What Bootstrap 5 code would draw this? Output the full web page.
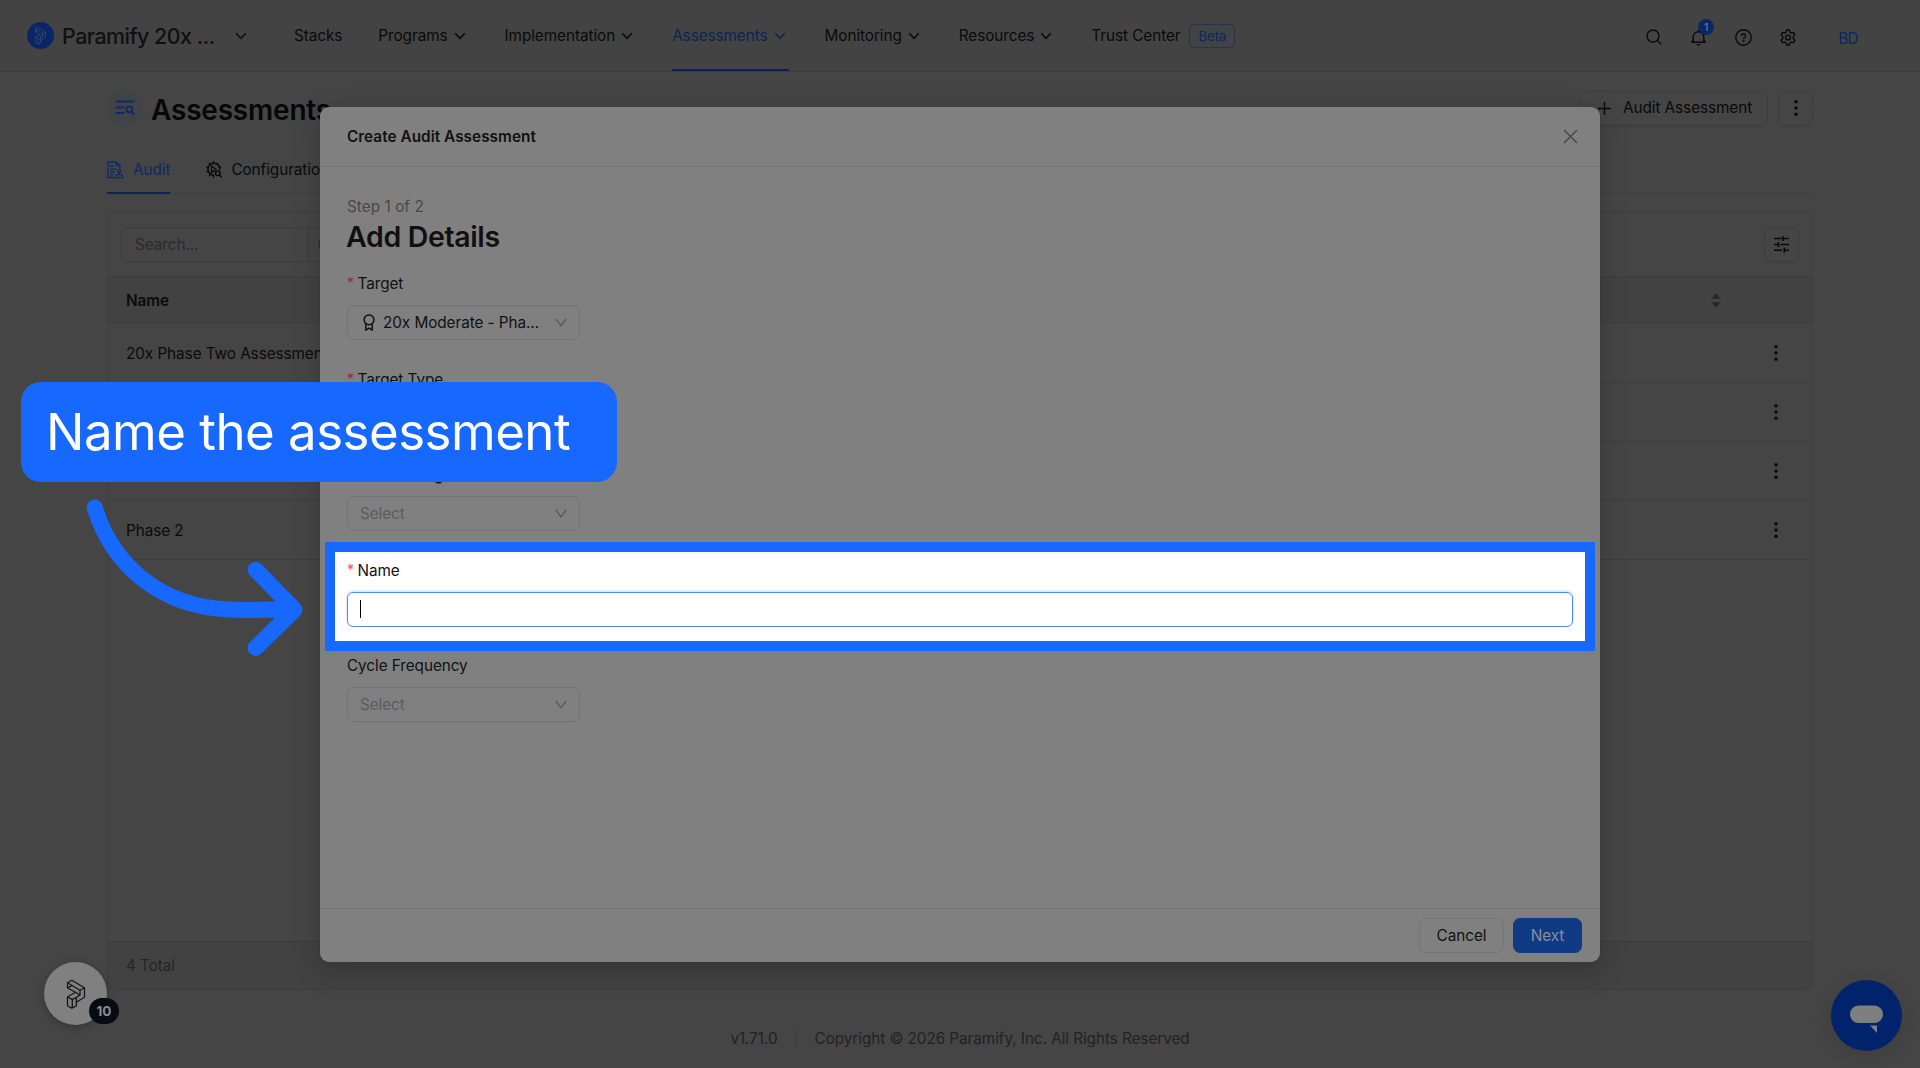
<!DOCTYPE html>
<html lang="en">
<head>
<meta charset="utf-8">
<meta name="viewport" content="width=device-width, initial-scale=1">
<title>Assessments</title>
<link href="https://cdn.jsdelivr.net/npm/bootstrap@5.3.0/dist/css/bootstrap.min.css" rel="stylesheet">
<style>
  body { width: 1920px; height: 1068px; overflow: hidden; position: relative; background: #454545; color: #0a0a0a; font: 400 15.3px/20px Inter, "Liberation Sans", sans-serif; letter-spacing: -.06px; }
  svg { display: block; flex: none; fill: none; stroke: currentColor; }
  svg.solid { fill: currentColor; stroke: none; }
  .topbar { height: 72px; background: #434343; border-bottom: 1px solid #3c3c3c; padding: 0 62px 0 27px; }
  .org { width: 267px; color: #101010; }
  .brand-name { font-size: 21.4px; letter-spacing: -.5px; font-weight: 500; line-height: 28px; margin-left: 8px; width: 173px; white-space: nowrap; }
  .menu { gap: 36px; }
  .menu-link { height: 71px; position: relative; white-space: nowrap; padding: 1px 3px 0 0; color: #0a0a0a; }
  .menu-link svg { margin-left: 6px; }
  .active-link { color: #0b2456; }
  .active-link::after { content: ""; position: absolute; left: 0; right: 0; bottom: 0; height: 2px; background: #0b2250; }
  .beta { border: 1px solid #28334d; border-radius: 5px; font-size: 13.3px; height: 24px; width: 46px; margin-left: 9px; color: #0c2759; background: #414347; }
  .tools { gap: 28px; padding-top: 3px; color: #0a0a0a; }
  .initials { color: #0b2764; margin-left: 14px; letter-spacing: -.6px; padding-top: 3px; }
  .bell-count { left: 8px; top: -10px; width: 16px; height: 16px; border-radius: 50%; background: #0b2862; color: #7a7f8c; font-size: 11px; line-height: 16px; text-align: center; }
  .page-zone { margin: 0 107px; padding-top: 18px; }
  .page-icon { width: 36px; height: 36px; border-radius: 50%; background: #414347; color: #0d2b66; }
  .page-title { font-size: 28px; font-weight: 600; line-height: 36px; margin: 0 0 0 8px; padding-top: 2px; height: 36px; letter-spacing: -.2px; color: #070707; }
  .ghost { height: 35px; border: 1px solid #3d3d3d; border-radius: 7px; color: #090909; box-shadow: 0 2px 0 rgba(0,0,0,.04); }
  .ghost-wide { width: 189px; padding-left: 18px; gap: 12px; }
  .ghost-sq { width: 35px; }
  .tabs { height: 42px; margin-top: 26px; border-bottom: 1px solid #3f3f3f; gap: 36px; }
  .tab-item { padding-bottom: 6px; }
  .tab-on { position: relative; color: #0c2a66; }
  .tab-on::after { content: ""; position: absolute; left: 0; right: 0; bottom: -1px; height: 2px; background: #0b2453; }
  .tabs svg { margin-right: 9px; }
  .panel { height: 778px; border: 1px solid #3e3e3e; border-radius: 9px; margin-top: 18px; overflow: hidden; }
  .panel-tools { height: 63px; padding: 0 13px; }
  .search { width: 222px; height: 35px; border: 1px solid #3c3c3c; border-radius: 7px; color: #2b2b2b; }
  .search-text { width: 187px; height: 33px; border-right: 1px solid #3c3c3c; padding-left: 13px; line-height: 34px; }
  .thead-row { height: 48px; background: #424242; border-top: 1px solid #3c3c3c; border-bottom: 1px solid #3d3d3d; padding: 0 72px 0 18px; font-weight: 600; }
  .trow { height: 59px; border-bottom: 1px solid #3d3d3d; padding: 0 34px 0 18px; }
  .trow span, .thead-row span { padding-top: 2px; }
  .sep { width: 1px; height: 30px; background: #3e3e3e; margin-left: 18px; }
  .panel-foot { height: 48px; background: #424242; border-top: 1px solid #3c3c3c; padding-left: 18px; color: #252525; }
  .page-foot { color: #222; padding-top: 39px; gap: 18px; }
  .foot-bar { width: 1px; height: 16px; background: #3a3a3a; }
  .dlg { position: absolute; left: 320px; top: 107px; width: 1280px; height: 855px; border-radius: 9px; background: #808080; box-shadow: 0 6px 16px rgba(0,0,0,.08), 0 3px 6px -4px rgba(0,0,0,.12), 0 9px 28px 8px rgba(0,0,0,.07); isolation: isolate; color: #111; }
  .dlg-head { height: 60px; border-bottom: 1px solid #767676; padding: 0 22px 0 27px; font-weight: 600; letter-spacing: .05px; }
  .dlg-body { padding: 28px 27px 0; }
  .step { color: #484848; line-height: 23px; letter-spacing: .05px; }
  .dlg-title { font-size: 28.5px; font-weight: 600; line-height: 38px; margin: 0 0 17px -1px; letter-spacing: -.35px; color: #101010; }
  .field { height: 95.6px; position: relative; }
  .flabel { height: 22px; line-height: 22px; margin-bottom: 10px; white-space: nowrap; }
  .star { color: #982a2b; font-size: 14px; width: 10.500px; line-height: 20px; }
  .pick { width: 233px; height: 35px; border: 1px solid #747474; border-radius: 7px; padding: 0 12px; }
  .pick svg:last-child { color: #555; }
  .blank { color: #5c5c5c; }
  .spot::before { content: ""; position: absolute; z-index: -1; left: -22px; right: -22px; top: -18px; height: 109px; border: 10px solid #1668ff; background: #fff; }
  .spot .star { color: #ff4d4f; }
  .live { height: 35px; border: 1px solid #4a8cff; border-radius: 6px; box-shadow: 0 -1px 0 1px #e4eefe; padding-left: 12px; }
  .caret { width: 1px; height: 18px; background: #000; }
  .dlg-foot { position: absolute; left: 0; right: 0; bottom: 0; height: 54px; border-top: 1px solid #747474; padding-right: 18px; gap: 9px; }
  .bt { height: 35px; border-radius: 7px; border: 1px solid #757575; width: 85px; }
  .bt-go { width: 69px; background: #113a85; border-color: #113a85; color: #8a8f9a; }
  .callout { position: absolute; left: 21px; top: 382px; width: 596px; height: 100px; border-radius: 20px; background: #1668ff; color: #fff; font-size: 51px; line-height: 100px; padding-left: 25px; letter-spacing: -.52px; white-space: nowrap; }
  .over { position: absolute; }
  .pointer { left: 80px; top: 490px; color: #1668ff; }
  .launcher { left: 44px; top: 962px; width: 63px; height: 63px; border-radius: 50%; background: #808080; box-shadow: 0 2px 8px rgba(0,0,0,.25); color: #161616; }
  .count { left: 89px; top: 998px; width: 30px; height: 26px; border-radius: 13px; background: #060b14; color: #8b8b8b; font-size: 13.5px; font-weight: 700; }
  .chat { left: 1831px; top: 980px; width: 71px; height: 71px; border-radius: 50%; background: #00236b; color: #7f7f7f; box-shadow: 0 4px 20px rgba(0,0,0,.12); }
</style>
</head>
<body>
<svg width="0" height="0" class="position-absolute">
  <symbol id="chev" viewBox="0 0 12 8"><path d="M1.200 1.200 6 6.400 10.800 1.200" stroke-width="1.6"/></symbol>
  <symbol id="thin-chev" viewBox="0 0 12 9"><path d="M.8 .8 6 7.800 11.200 .8" stroke-width="1.200"/></symbol>
  <symbol id="dots" viewBox="0 0 4 16"><g fill="currentColor" stroke="none"><circle cx="2" cy="1.800" r="1.700"/><circle cx="2" cy="8" r="1.700"/><circle cx="2" cy="14.200" r="1.700"/></g></symbol>
  <symbol id="logo" viewBox="0 0 20 30"><path stroke-linejoin="round" d="M1.500 3.800 5.800 1.300 18.500 8.800V18.300L10.300 23.200V27L5.800 29.200 1.500 27V17.800L9.500 13.300 1.500 9ZM1.500 3.800 14 11.200 18.500 8.800M14 11.200V16.200L6.300 20.600V29M1.500 17.800 6.300 20.600M1.500 9 5.800 6.600M9.500 13.300 14 16.200M10.300 23.200V18.400"/></symbol>
</svg>

<header class="topbar d-flex align-items-start">
  <div class="org d-flex align-items-center h-100">
    <svg width="27" height="27" viewBox="0 0 27 27" color="#4a5678"><circle cx="13.500" cy="13.500" r="13.500" fill="#0a2664" stroke="none"/><use href="#logo" x="7.500" y="4.500" width="12" height="18"/></svg>
    <div class="brand-name">Paramify 20x ...</div>
    <svg width="12" height="8"><use href="#chev"/></svg>
  </div>
  <nav class="menu d-flex">
    <a class="menu-link pe-0 d-flex align-items-center text-decoration-none">Stacks</a>
    <a class="menu-link d-flex align-items-center text-decoration-none">Programs<svg width="12" height="8"><use href="#chev"/></svg></a>
    <a class="menu-link d-flex align-items-center text-decoration-none">Implementation<svg width="12" height="8"><use href="#chev"/></svg></a>
    <a class="menu-link active-link d-flex align-items-center text-decoration-none">Assessments<svg width="12" height="8"><use href="#chev"/></svg></a>
    <a class="menu-link d-flex align-items-center text-decoration-none">Monitoring<svg width="12" height="8"><use href="#chev"/></svg></a>
    <a class="menu-link d-flex align-items-center text-decoration-none">Resources<svg width="12" height="8"><use href="#chev"/></svg></a>
    <a class="menu-link d-flex align-items-center text-decoration-none">Trust Center<span class="beta d-flex align-items-center justify-content-center">Beta</span></a>
  </nav>
  <div class="tools d-flex align-items-center ms-auto h-100">
    <svg width="16" height="16" viewBox="0 0 16 16" stroke-width="1.400"><circle cx="7" cy="7" r="6"/><path d="m11.400 11.400 3.800 3.800"/></svg>
    <div class="position-relative">
      <svg width="17" height="17" viewBox="0 0 17 17" stroke-width="1.400" stroke-linejoin="round"><path d="M1.600 13.300h13.800M3.200 13V8a5.300 5.300 0 0 1 10.600 0v5M8.500 1v1.700M6.700 15.600h3.600"/><path d="m3.200 10.800-1.600 2.500M13.800 10.800l1.600 2.500"/></svg>
      <span class="bell-count over">1</span>
    </div>
    <svg width="17" height="17" viewBox="0 0 17 17" stroke-width="1.400"><circle cx="8.500" cy="8.500" r="7.700"/><path d="M6.400 6.900a2.100 2.100 0 1 1 3 1.900c-.7.300-.9.700-.9 1.500"/><circle cx="8.500" cy="12.200" r=".4"/></svg>
    <svg width="16" height="17" viewBox="0 0 16 17" stroke-width="1.400" stroke-linejoin="round"><path d="M6.600 1h2.800l.5 2.100 1.500.9 2.100-.7 1.400 2.500-1.600 1.500v2.400l1.600 1.500-1.400 2.500-2.100-.7-1.500.9-.5 2.100H6.600l-.5-2.100-1.500-.9-2.100.7-1.400-2.500 1.600-1.500V7.300L1.100 5.800l1.400-2.500 2.100.7 1.500-.9z"/><circle cx="8" cy="8.500" r="2.400"/></svg>
    <span class="initials">BD</span>
  </div>
</header>

<main class="page-zone">
  <div class="d-flex align-items-center">
    <div class="page-icon d-flex align-items-center justify-content-center">
      <svg width="20" height="16" viewBox="0 0 20 16" stroke-width="1.800" stroke-linecap="round"><path d="M1.500 1.500h17M1.500 7.500h7M1.500 13h7"/><circle cx="14.300" cy="9.500" r="3"/><path d="m16.600 11.900 2.100 2.400"/></svg>
    </div>
    <h1 class="page-title">Assessments</h1>
    <div class="ghost ghost-wide d-flex align-items-center ms-auto">
      <svg width="13" height="13" viewBox="0 0 13 13" stroke-width="1.400"><path d="M6.500 0v13M0 6.500h13"/></svg><span>Audit Assessment</span>
    </div>
    <div class="ghost ghost-sq d-flex align-items-center justify-content-center" style="margin-left:10px"><svg width="4" height="16"><use href="#dots"/></svg></div>
  </div>

  <div class="tabs d-flex">
    <div class="tab-item tab-on d-flex align-items-center">
      <svg width="17" height="18" viewBox="0 0 17 18" stroke-width="1.300" stroke-linecap="round" stroke-linejoin="round"><path d="M7 16.500H1V1h8.500L13 4.500V7M9.300 1v3.700H13M3.600 5h2.600M3.600 8.200h5M3.600 11h3.500M3.600 13.800h2.500"/><circle cx="12.300" cy="10.200" r="1.500"/><path d="M12.300 11.700v1.800M9 16.800v-1.600c0-1 .6-1.600 1.600-1.600h3.400c1 0 1.600.6 1.600 1.600v1.600z"/></svg>Audit
    </div>
    <div class="tab-item d-flex align-items-center">
      <svg width="16" height="17" viewBox="0 0 16 17" stroke-width="1.500"><path d="M13.800 9A6 6 0 1 0 8 14.200"/><path d="M7.500 0v2.500M3 1.800l1.300 2M.3 5.800l2.300.8M.2 11l2.300-1M3.200 15.200l1.300-2M7.500 14v2.700M12 1.800l-1.300 2M15 5.800l-2.300.8M5.500 5l4.500 3.300-4.500 3.300z" stroke-width="1.300"/><circle cx="11.800" cy="12.200" r="2.300"/><path d="m13.500 14 2.200 2.300"/></svg>Configuration
    </div>
  </div>

  <section class="panel d-flex flex-column">
    <div class="panel-tools d-flex align-items-center justify-content-between">
      <div class="search d-flex"><div class="search-text">Search...</div><svg class="ms-2 mt-2" width="15" height="15" viewBox="0 0 16 16" stroke-width="1.300"><circle cx="8" cy="8" r="6"/></svg></div>
      <div class="ghost ghost-sq d-flex align-items-center justify-content-center">
        <svg width="15" height="17" viewBox="0 0 15 17" stroke-width="1.600"><path d="M0 2.500h7.500M9 2.500h6M9 0v5M0 8.500h4.500M6.500 8.500H15M4.500 6v5M0 14.300h8M10.500 14.300H15M10.300 11.800v5"/></svg>
      </div>
    </div>
    <div class="thead-row d-flex align-items-center">
      <span>Name</span>
      <svg class="solid ms-auto" width="10" height="15" viewBox="0 0 10 15" color="#262626"><path d="M5 .5l4.600 5.300H.4zM5 14.500l4.600-5.300H.4z"/></svg>
      <i class="sep"></i>
    </div>
    <div class="trow d-flex align-items-center justify-content-between"><span>20x Phase Two Assessment</span><svg width="4" height="16"><use href="#dots"/></svg></div>
    <div class="trow d-flex align-items-center justify-content-end"><svg width="4" height="16"><use href="#dots"/></svg></div>
    <div class="trow d-flex align-items-center justify-content-end"><svg width="4" height="16"><use href="#dots"/></svg></div>
    <div class="trow d-flex align-items-center justify-content-between"><span>Phase 2</span><svg width="4" height="16"><use href="#dots"/></svg></div>
    <div class="panel-foot d-flex align-items-center mt-auto">4 Total</div>
  </section>
  <footer class="page-foot d-flex justify-content-center align-items-center"><span>v1.71.0</span><i class="foot-bar"></i><span>Copyright © 2026 Paramify, Inc. All Rights Reserved</span></footer>
</main>

<section class="dlg">
  <div class="dlg-head d-flex align-items-center justify-content-between">
    <span>Create Audit Assessment</span>
    <svg width="15" height="15" viewBox="0 0 15 15" stroke-width="1.300" color="#444"><path d="M1 1l13 13M14 1 1 14"/></svg>
  </div>
  <div class="dlg-body">
    <div class="step">Step 1 of 2</div>
    <h2 class="dlg-title">Add Details</h2>
    <div class="field">
      <div class="flabel d-flex"><span class="star">*</span>Target</div>
      <div class="pick d-flex align-items-center">
        <svg class="me-2" style="margin-left:3px" width="12" height="17" viewBox="0 0 12 17" stroke-width="1.500" stroke-linejoin="round"><circle cx="6" cy="5.800" r="4.900"/><path d="M2.800 9.600v6.600L6 14.200l3.200 2v-6.600"/></svg>
        <span>20x Moderate - Pha...</span>
        <svg class="ms-auto" width="12" height="9"><use href="#thin-chev"/></svg>
      </div>
    </div>
    <div class="field">
      <div class="flabel d-flex"><span class="star">*</span>Target Type</div>
    </div>
    <div class="field">
      <div class="flabel d-flex fw-semibold"><span class="star">*</span>Authorizing</div>
      <div class="pick blank d-flex align-items-center justify-content-between">Select<svg width="12" height="9"><use href="#thin-chev"/></svg></div>
    </div>
    <div class="field spot">
      <div class="flabel d-flex"><span class="star">*</span>Name</div>
      <div class="live d-flex align-items-center"><i class="caret"></i></div>
    </div>
    <div class="field">
      <div class="flabel">Cycle Frequency</div>
      <div class="pick blank d-flex align-items-center justify-content-between">Select<svg width="12" height="9"><use href="#thin-chev"/></svg></div>
    </div>
  </div>
  <div class="dlg-foot d-flex align-items-center justify-content-end">
    <div class="bt d-flex align-items-center justify-content-center">Cancel</div>
    <div class="bt bt-go d-flex align-items-center justify-content-center">Next</div>
  </div>
</section>

<div class="launcher over d-flex align-items-center justify-content-center"><svg width="20" height="30" stroke-width="1.300"><use href="#logo"/></svg></div>
<div class="count over d-flex align-items-center justify-content-center">10</div>
<div class="chat over"><svg class="solid" width="71" height="71" viewBox="0 0 71 71"><rect x="19" y="25.500" width="33" height="17.500" rx="8.700"/><path d="M39 45.500h7v7.500z"/></svg></div>

<div class="callout">Name the assessment</div>
<svg class="over pointer" width="230" height="175" viewBox="80 490 230 175" stroke-width="16" stroke-linecap="round" stroke-linejoin="round"><path d="M94.700 507.500C112 563 158 607 230 609.500 250 610.500 272 610 292 608.500M255.700 569.800 294.500 609.700 255.500 648"/></svg>
<script src="https://cdn.jsdelivr.net/npm/bootstrap@5.3.0/dist/js/bootstrap.bundle.min.js"></script>
</body>
</html>
